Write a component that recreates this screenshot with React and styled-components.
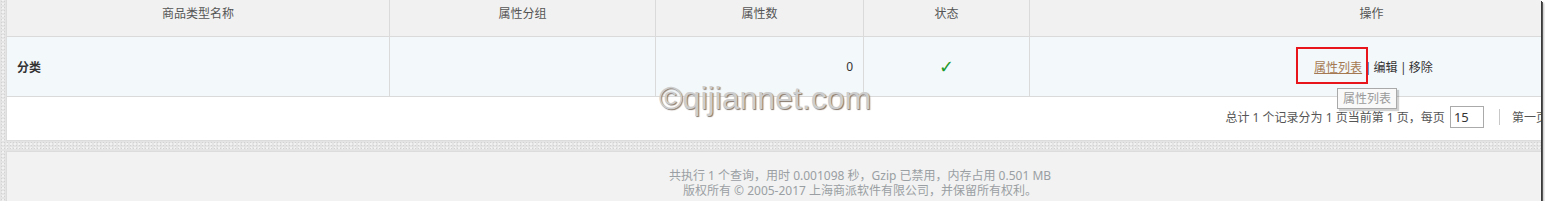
import React from "react";
import styled, { createGlobalStyle } from "styled-components";

const Global = createGlobalStyle`
  html, body { margin: 0; padding: 0; background: #ffffff; }
  body { font-family: "Noto Sans", "Noto Sans CJK SC", sans-serif; font-size: 12px; color: #333; }
`;

const Shot = styled.div`
  position: relative;
  width: 1541px;
  height: 201px;
  overflow: hidden;
  background-color: #e4e4e4;
  background-image:
    radial-gradient(circle, #d2d2d2 0.7px, transparent 0.9px),
    radial-gradient(circle, #f2f2f2 0.7px, transparent 0.9px);
  background-size: 3px 3px, 4px 4px;
  background-position: 0 0, 1px 2px;
  box-shadow: 1px 1px 0 #3a3a3a, 2px 2px 0 #555, 3px 3px 2px rgba(0,0,0,0.25);
`;

const Page = styled.div`
  width: 1708px;
  padding: 0 6px;
  margin-top: -10px;
`;

const Panel = styled.div`
  background: #fff;
  border-left: 1px solid #dcdcdc;
  border-right: 1px solid #dcdcdc;
  border-bottom: 1px solid #dcdcdc;
`;

const Grid = styled.div`
  display: grid;
  grid-template-columns: 383px 266px 208px 166px 1fr;
`;

const HeadCell = styled.div`
  height: 47px;
  display: flex;
  align-items: center;
  justify-content: center;
  padding-top: 10px;
  box-sizing: border-box;
  background: #f1f1f1;
  color: #555;
  border-bottom: 1px solid #dadada;
  border-right: ${p => (p.$last ? "none" : "1px solid #dadada")};
  & > span { transform: translateY(-5px); }
`;

const Cell = styled.div`
  height: 60px;
  box-sizing: border-box;
  display: flex;
  align-items: center;
  justify-content: ${p => p.$align || "center"};
  padding: 0 10px;
  background: #f3f8fb;
  border-bottom: 1px solid #dadada;
  border-right: ${p => (p.$last ? "none" : "1px solid #dadada")};
  font-weight: ${p => (p.$bold ? 700 : 400)};
  color: #333;
`;

const Check = styled.span`
  color: #1e9a2c;
  font-size: 18px;
  line-height: 1;
  font-family: "DejaVu Sans", sans-serif;
`;

const Ops = styled.span`
  position: relative;
  color: #333;
  white-space: pre;
  margin-left: 4px;
`;

const Sep = styled.span`
  letter-spacing: -0.5px;
`;

const OpLink = styled.a`
  color: #a57a52;
  text-decoration: underline;
  cursor: pointer;
`;

const Marker = styled.span`
  position: absolute;
  left: -18px;
  top: -11px;
  width: 68px;
  height: 33px;
  border: 2px solid #e8161b;
`;

const Tip = styled.span`
  position: absolute;
  left: 23px;
  top: 30px;
  padding: 3px 5px 2px;
  line-height: 14px;
  color: #9a9a9a;
  background: #f9f9f9;
  border: 1px solid #a9a9a9;
  box-shadow: 2px 2px 1px rgba(0,0,0,0.18);
  white-space: nowrap;
`;

const Pager = styled.div`
  height: 43px;
  display: flex;
  align-items: center;
  justify-content: flex-end;
  padding-right: 33px;
  padding-bottom: 3px;
  box-sizing: border-box;
  color: #555;
  white-space: pre;
`;

const PageInput = styled.span`
  display: inline-flex;
  align-items: center;
  width: 34px;
  height: 22px;
  box-sizing: border-box;
  margin-left: 2px;
  padding-left: 3px;
  border: 1px solid #aaa;
  background: #fff;
  color: #333;
  font-size: 13px;
`;

const PageLinks = styled.span`
  display: inline-flex;
  align-items: center;
  gap: 8px;
  margin-left: 15px;
  padding-left: 12px;
  border-left: 1px solid #c8c8c8;
  height: 16px;
  color: #555;
`;

const Gap = styled.div`
  height: 10px;
`;

const Footer = styled.div`
  background: #f2f2f2;
  border-top: 1px solid #dcdcdc;
  border-left: 1px solid #dcdcdc;
  border-right: 1px solid #dcdcdc;
  padding-top: 16px;
  height: 60px;
  text-align: center;
  color: #9a9fa3;
  line-height: 15px;
`;

const Watermark = styled.div`
  position: absolute;
  left: 659px;
  top: 80px;
  font-family: "Liberation Sans", Arial, sans-serif;
  font-size: 32px;
  line-height: 36px;
  color: #cdcdcd;
  text-shadow: 1px 1px 1px #85766a;
  pointer-events: none;
  white-space: nowrap;
`;

export default function App() {
  const heads = ["商品类型名称", "属性分组", "属性数", "状态", "操作"];
  return (
    <>
      <Global />
      <Shot>
        <Page>
          <Panel>
            <Grid>
              {heads.map((h, i) => (
                <HeadCell key={h} $last={i === heads.length - 1}>
                  <span>{h}</span>
                </HeadCell>
              ))}
              <Cell $align="flex-start" $bold>分类</Cell>
              <Cell />
              <Cell $align="flex-end">0</Cell>
              <Cell><Check>✓</Check></Cell>
              <Cell $last>
                <Ops>
                  <OpLink>属性列表</OpLink>
                  <Sep>{" | "}</Sep>编辑<Sep>{" | "}</Sep>移除
                  <Marker />
                  <Tip>属性列表</Tip>
                </Ops>
              </Cell>
            </Grid>
            <Pager>
              {"总计 1 个记录分为 1 页当前第 1 页，每页 "}
              <PageInput>15</PageInput>
              <PageLinks>
                <span>第一页</span>
                <span>上一页</span>
                <span>下一页</span>
                <span>最末页</span>
              </PageLinks>
            </Pager>
          </Panel>
          <Gap />
          <Footer>
            <div>共执行 1 个查询，用时 0.001098 秒，Gzip 已禁用，内存占用 0.501 MB</div>
            <div>版权所有 © 2005-2017 上海商派软件有限公司，并保留所有权利。</div>
          </Footer>
        </Page>
        <Watermark>©qijiannet.com</Watermark>
      </Shot>
    </>
  );
}
